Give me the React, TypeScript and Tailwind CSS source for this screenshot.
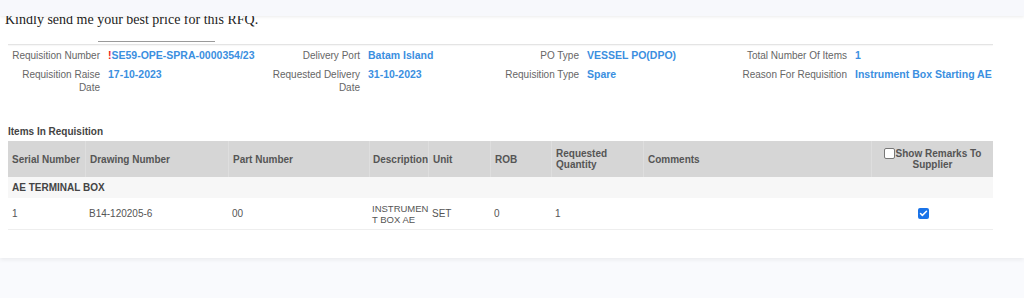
import { Check } from 'lucide-react';

const details = [
  [
    { label: 'Requisition Number', value: 'SE59-OPE-SPRA-0000354/23', flag: true },
    { label: 'Delivery Port', value: 'Batam Island' },
    { label: 'PO Type', value: 'VESSEL PO(DPO)' },
    { label: 'Total Number Of Items', value: '1' },
  ],
  [
    { label: 'Requisition Raise Date', value: '17-10-2023' },
    { label: 'Requested Delivery Date', value: '31-10-2023' },
    { label: 'Requisition Type', value: 'Spare' },
    { label: 'Reason For Requisition', value: 'Instrument Box Starting AE' },
  ],
];

const columns = [
  { name: 'Serial Number', w: 'w-[77px]' },
  { name: 'Drawing Number', w: 'w-[143px]' },
  { name: 'Part Number', w: 'w-[141px]' },
  { name: 'Description', w: 'w-[59px]' },
  { name: 'Unit', w: 'w-[62px]' },
  { name: 'ROB', w: 'w-[61px]' },
  { name: 'Requested Quantity', w: 'w-[92px]' },
  { name: 'Comments', w: 'w-[228px]' },
];

const font = { fontFamily: 'Tahoma, "Liberation Sans", Arial, sans-serif' };

export default function App() {
  return (
    <div className="relative min-h-[298px] bg-[#f9fafd]" style={font}>
      {/* sticky top strip */}
      <div className="absolute top-0 left-0 right-0 h-[16px] bg-[#f7f8fc] shadow-[0_1px_3px_rgba(0,0,0,0.08)] z-10" />

      <div className="bg-white pt-[12px] pb-[28px] shadow-[0_2px_4px_rgba(0,0,0,0.06)]">
        <p className="pl-[5px] text-[14px] leading-[16px] text-[#222]" style={{ fontFamily: '"Liberation Serif", serif' }}>
          Kindly send me your best price for this RFQ.
        </p>
        <div className="ml-[98px] mt-[13px] w-[117px] border-t border-[#9a9a9a]" />
        <div className="mx-[8px] mt-[2px] w-[985px] border-t border-[#e4e4e4] shadow-[0_1px_1px_rgba(0,0,0,0.04)]" />

        {/* requisition details */}
        <div className="ml-[2px] mt-[3px] w-[991px] grid grid-cols-[98px_152px_92px_104px_99px_140px_112px_1fr] gap-x-[8px] gap-y-[4px] leading-[13px]">
          {details.map((row, ri) =>
            row.map(d => (
              <div key={ri + d.label} className="contents">
                <div className="py-[1px] text-right text-[10px] text-[#666]">{d.label}</div>
                <div className="py-[1px] text-[10.5px] font-bold text-[#3b8fdf] whitespace-nowrap">
                  {d.flag && <span className="text-[#e22] font-bold">!</span>}
                  {d.value}
                </div>
              </div>
            ))
          )}
        </div>

        <div className="mx-[8px] mt-[31px] text-[10px] leading-[12px] font-bold text-[#444]">Items In Requisition</div>

        {/* items table */}
        <div className="mx-[8px] mt-[3px] w-[985px] text-[10px] leading-[11px]">
          <div className="flex h-[36px] bg-[#d6d6d6] font-bold text-[#555]">
            {columns.map((c, i) => (
              <div
                key={c.name}
                className={`${c.w} flex items-center ${i === 3 ? 'pl-[3px]' : 'px-[4px]'} ${i > 0 ? 'border-l border-[#dedede]' : ''}`}
              >
                {c.name}
              </div>
            ))}
            <div className="flex-1 flex items-center justify-center border-l border-[#dedede] text-center">
              <div>
                <span className="inline-block align-[-2px] mr-[1px] h-[11px] w-[11px] rounded-[2px] border border-[#777] bg-white" />
                Show Remarks To
                <br />
                Supplier
              </div>
            </div>
          </div>
          <div className="flex h-[21px] items-center bg-[#f7f7f7] px-[4px] font-bold text-[#444]">AE TERMINAL BOX</div>
          <div className="flex h-[32px] border-b border-[#eeeeee] text-[#555]">
            {['1', 'B14-120205-6', '00', 'INSTRUMENT BOX AE', 'SET', '0', '1', ''].map((v, i) => (
              <div key={i} className={`${columns[i].w} flex items-center ${i === 3 ? 'pl-[3px] pr-0' : 'px-[4px]'}`}>
                {i === 3 ? (
                  <span className="whitespace-nowrap text-[9.5px]">
                    INSTRUMEN
                    <br />
                    T BOX AE
                  </span>
                ) : (
                  v
                )}
              </div>
            ))}
            <div className="flex-1 flex items-center justify-center pr-[18px]">
              <span className="flex h-[11px] w-[11px] items-center justify-center rounded-[2px] bg-[#1a73e8]">
                <Check size={9} strokeWidth={4} color="white" />
              </span>
            </div>
          </div>
        </div>
      </div>
    </div>
  );
}
